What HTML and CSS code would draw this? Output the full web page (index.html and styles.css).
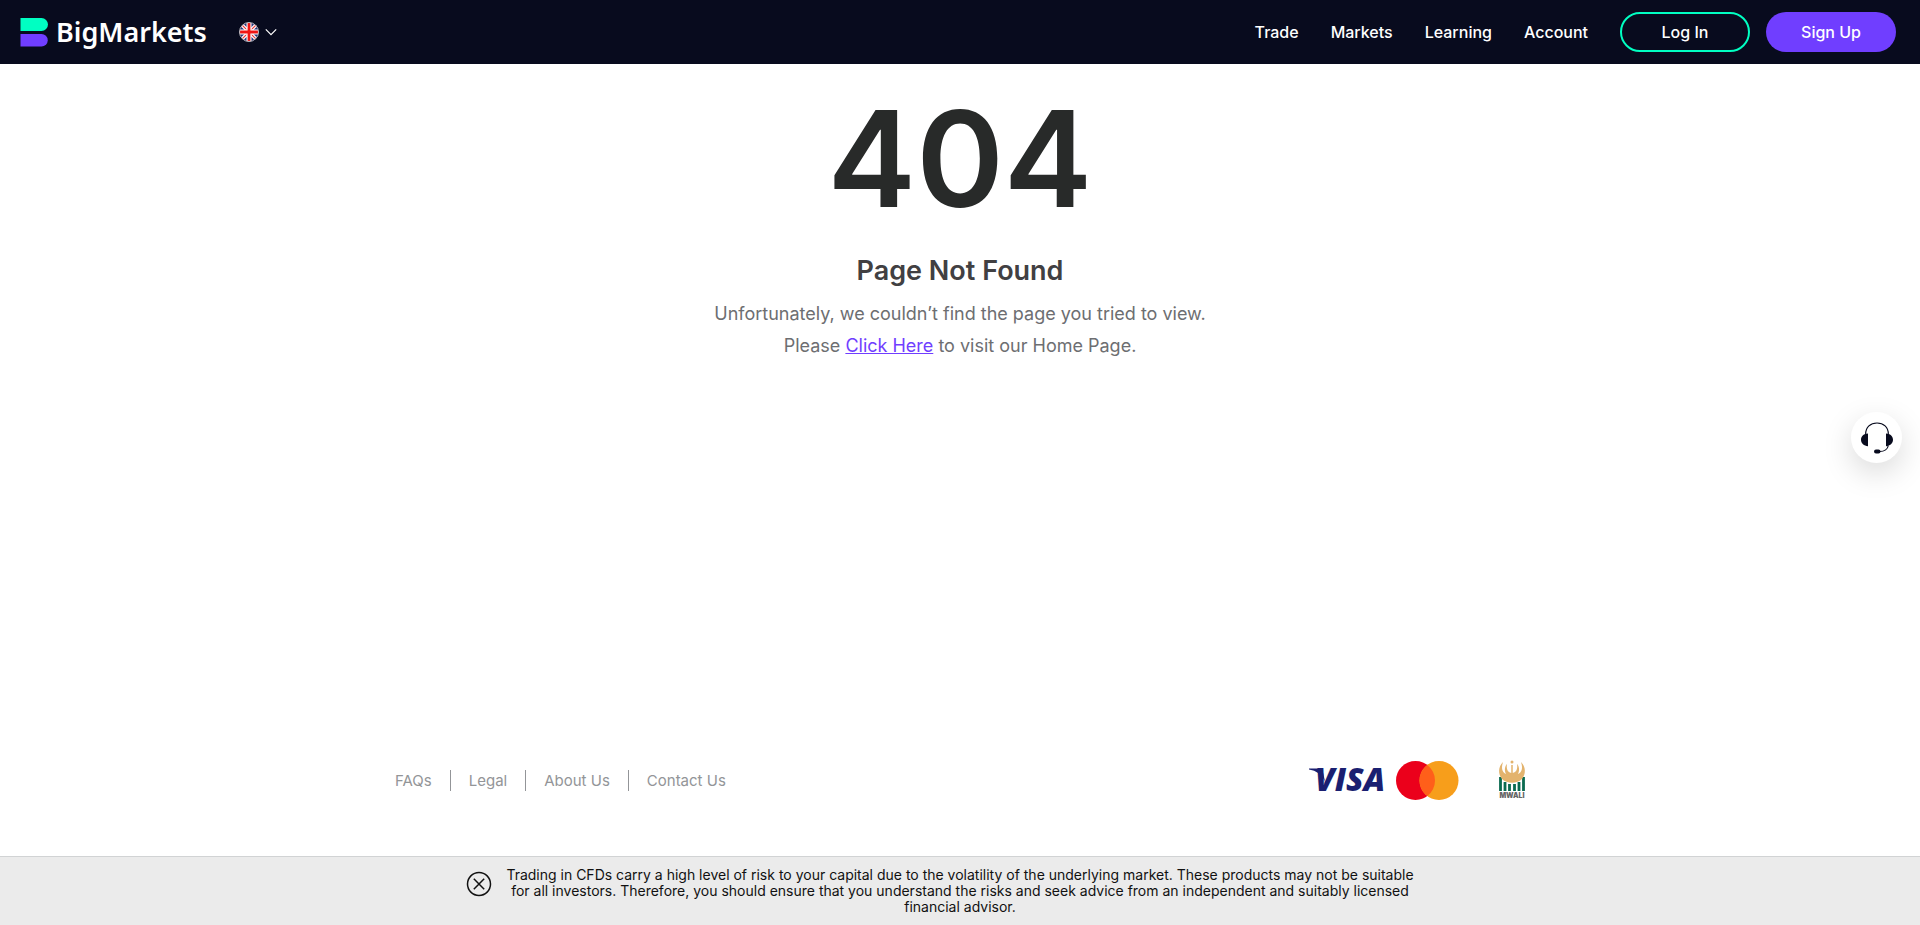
FILE: index.html
```html
<!DOCTYPE html>
<html lang="en">
<head>
    <meta charset="UTF-8">
    <meta name="viewport" content="width=device-width, initial-scale=1.0">
    <title>Page Not Found | BigMarkets</title>
    <link rel="stylesheet" href="styles.css">
</head>
<body>

    <header class="site-header">
        <a href="#home" class="logo">
            <svg width="28" height="29" viewBox="0 0 28 29" aria-hidden="true">
                <path d="M.5 0h21a6.500 6.500 0 0 1 0 13H.5z" fill="#00ffc2"/>
                <path d="M.5 16h21a6.200 6.200 0 0 1 0 12.500H.5z" fill="#703eff"/>
            </svg>
            <span>BigMarkets</span>
        </a>
        <button class="lang-btn" type="button" aria-label="Language: English">
            <svg width="20" height="20" viewBox="0 0 20 20" aria-hidden="true">
                <clipPath id="flagClip"><circle cx="10" cy="10" r="9.500"/></clipPath>
                <g clip-path="url(#flagClip)">
                    <path d="M0 0h20v20H0z" fill="#29337a"/>
                    <path d="M0 0l20 20M20 0L0 20" stroke="#fff" stroke-width="3.600"/>
                    <path d="M0 0l20 20M20 0L0 20" stroke="#e33" stroke-width="1.200"/>
                    <path d="M10 0v20M0 10h20" stroke="#fff" stroke-width="5"/>
                    <path d="M10 0v20M0 10h20" stroke="#f01414" stroke-width="2.800"/>
                </g>
                <circle cx="10" cy="10" r="9.500" fill="none" stroke="#b9b9bd"/>
            </svg>
            <svg width="12" height="8" viewBox="0 0 12 8" aria-hidden="true">
                <path d="M.8 1.300L6 6.700l5.200-5.400" fill="none" stroke="#fff" stroke-width="1.200"/>
            </svg>
        </button>

        <nav class="main-nav">
            <a href="#trade">Trade</a>
            <a href="#markets">Markets</a>
            <a href="#learning">Learning</a>
            <a href="#account">Account</a>
        </nav>
        <div class="header-actions">
            <button class="btn btn-outline" type="button">Log In</button>
            <button class="btn btn-primary" type="button">Sign Up</button>
        </div>
    </header>

    <main class="not-found">
        <h1>404</h1>
        <h2>Page Not Found</h2>
        <p>Unfortunately, we couldn’t find the page you tried to view.</p>
        <p>Please <a href="#home">Click Here</a> to visit our Home Page.</p>
    </main>

    <footer class="site-footer">
        <ul class="footer-links">
            <li><a href="#faqs">FAQs</a></li>
            <li><a href="#legal">Legal</a></li>
            <li><a href="#about">About Us</a></li>
            <li><a href="#contact">Contact Us</a></li>
        </ul>
        <div class="footer-logos">
            <svg width="80" height="44" viewBox="0 0 80 44" role="img" aria-label="Visa">
                <path d="M1 10.500h9q4 0 5 4l2 9Q12 13 1 11.500z" fill="#1a1f71"/>
                <text x="7" y="33" class="visa-text">VISA</text>
            </svg>
            <svg width="63" height="39" viewBox="0 0 63 39" role="img" aria-label="Mastercard">
                <circle cx="19.500" cy="19.500" r="19.500" fill="#eb001b"/>
                <circle cx="43" cy="19.500" r="19.500" fill="#f79e1b"/>
                <path d="M31.250 3.940a19.500 19.500 0 0 1 0 31.120a19.500 19.500 0 0 1 0-31.120z" fill="#ff5f1a"/>
            </svg>
            <svg class="mwali" width="30" height="44" viewBox="-2 -2 30 44" role="img" aria-label="Mwali">
                <path d="M1.500 17v14M6 22v9M10.500 24v7M15.500 24v7M20 22v9M24.500 17v14" stroke="#0b6b50" stroke-width="2.800"/>
                <path d="M4 2C-1 7-1 14 3 19c5 5 15 5 20 0c4-5 4-12-1-17c2 6 1 10-3 12c2-4 1-8-1-10c1 5-1 9-5 9s-6-4-5-9c-2 2-3 6-1 10C3 12 2 8 4 2z" fill="#e3b36d"/>
                <path d="M13 5v9" stroke="#e3b36d" stroke-width="1.500"/>
                <circle cx="13" cy="2" r="1.500" fill="#e3b36d"/>
                <text x="13" y="38" class="mwali-text">MWALI</text>
            </svg>
        </div>
    </footer>

    <div class="risk-bar">
        <button class="risk-close" type="button" aria-label="Close">
            <svg width="26" height="26" viewBox="0 0 26 26" aria-hidden="true">
                <circle cx="13" cy="13" r="11.500"/>
                <path d="M7.800 7.800l10.400 10.400M18.200 7.800L7.800 18.200"/>
            </svg>
        </button>
        <p>Trading in CFDs carry a high level of risk to your capital due to the volatility of the underlying market. These products may not be suitable for all investors. Therefore, you should ensure that you understand the risks and seek advice from an independent and suitably licensed financial advisor.</p>
    </div>

    <button class="support-btn" type="button" aria-label="Support">
        <svg width="32" height="32" viewBox="0 0 32 32" aria-hidden="true">
            <path d="M4.700 12C4.700 5 9.500 1 16 1s11.300 4 11.300 11" fill="none" stroke="#080b1e" stroke-width="1.200"/>
            <path d="M7 11.500v12.700C3 24 0 21.500 0 17.800s3-6.100 7-6.300zM25 11.500v12.700c4-.2 7-2.700 7-6.400s-3-6.100-7-6.300z" fill="#080b1e"/>
            <path d="M27.300 23.500c-.5 3.500-4 6-8.500 6" fill="none" stroke="#080b1e" stroke-width="1.200"/>
            <rect x="13" y="27.500" width="6.500" height="4" rx="2" fill="#080b1e"/>
        </svg>
    </button>

</body>
</html>
```
FILE: styles.css
```css
* {
    margin: 0;
    padding: 0;
    box-sizing: border-box;
}

body {
    min-height: 100vh;
    display: flex;
    flex-direction: column;
    font-family: Inter, Arial, sans-serif;
    background-color: #fff;
}

button {
    font-family: inherit;
    border: none;
    background: none;
    cursor: pointer;
}

svg {
    display: block;
}

/* Header */
.site-header {
    height: 64px;
    padding: 0 24px 0 20px;
    display: flex;
    align-items: center;
    background-color: #080b1e;
}

.logo {
    display: flex;
    align-items: center;
    gap: 8px;
    color: #fff;
    font-family: "Noto Sans", sans-serif;
    font-size: 27px;
    font-weight: 600;
    line-height: 32px;
    text-decoration: none;
}

.lang-btn {
    display: flex;
    align-items: center;
    gap: 6px;
    margin-left: 32px;
}

.main-nav {
    display: flex;
    gap: 32px;
    margin-left: auto;
}

.main-nav a {
    color: #fff;
    font-size: 16px;
    font-weight: 500;
    text-decoration: none;
}

.header-actions {
    display: flex;
    gap: 16px;
    margin-left: 32px;
}

.btn {
    width: 130px;
    height: 40px;
    border-radius: 20px;
    color: #fff;
    font-size: 16px;
    font-weight: 500;
}

.btn-outline {
    border: 2px solid #00ffc2;
}

.btn-primary {
    background-color: #703eff;
}

/* 404 message */
.not-found {
    flex: 1;
    padding: 15px 16px 32px;
    text-align: center;
}

.not-found h1 {
    color: #282a29;
    font-size: 133px;
    font-weight: 600;
    line-height: 160px;
}

.not-found h2 {
    margin: 15px 0 10px;
    color: #414042;
    font-size: 27px;
    font-weight: 600;
    line-height: 34px;
}

.not-found p {
    color: #6d6e71;
    font-size: 18px;
    line-height: 32px;
}

.not-found p a {
    color: #703eff;
}

/* Footer */
.site-footer {
    width: 100%;
    max-width: 1160px;
    margin: 0 auto;
    padding: 0 13px 54px 15px;
    display: flex;
    justify-content: space-between;
    align-items: center;
}

.footer-links {
    display: flex;
    list-style: none;
}

.footer-links li {
    padding: 0 18px;
    border-left: 1px solid #939598;
    line-height: 21px;
}

.footer-links li:first-child {
    padding-left: 0;
    border-left: none;
}

.footer-links a {
    color: #939598;
    font-size: 15px;
    text-decoration: none;
}

.footer-logos {
    display: flex;
    align-items: center;
    gap: 8px;
}

.visa-text {
    fill: #1a1f71;
    font-family: "Open Sans", sans-serif;
    font-size: 32px;
    font-style: italic;
    font-weight: 800;
}

.mwali {
    margin-left: 30px;
}

.mwali-text {
    fill: #666;
    font-size: 7px;
    font-weight: 900;
    text-anchor: middle;
}

/* Risk warning */
.risk-bar {
    display: flex;
    justify-content: center;
    align-items: flex-start;
    gap: 12px;
    padding: 10px 16px;
    border-top: 1px solid #d1d3d4;
    background-color: #ebebeb;
}

.risk-bar p {
    max-width: 912px;
    margin-right: 38px;
    color: #111;
    font-size: 14px;
    line-height: 16px;
    text-align: center;
}

.risk-close {
    margin-top: 4px;
}

.risk-close svg {
    fill: none;
    stroke: #111;
    stroke-width: 1.5;
}

/* Floating support button */
.support-btn {
    position: fixed;
    top: 412px;
    right: 18px;
    width: 51px;
    height: 51px;
    display: flex;
    align-items: center;
    justify-content: center;
    border-radius: 50%;
    background-color: #fff;
    box-shadow: 0 10px 30px rgba(0, 0, 0, 0.15);
}
```
